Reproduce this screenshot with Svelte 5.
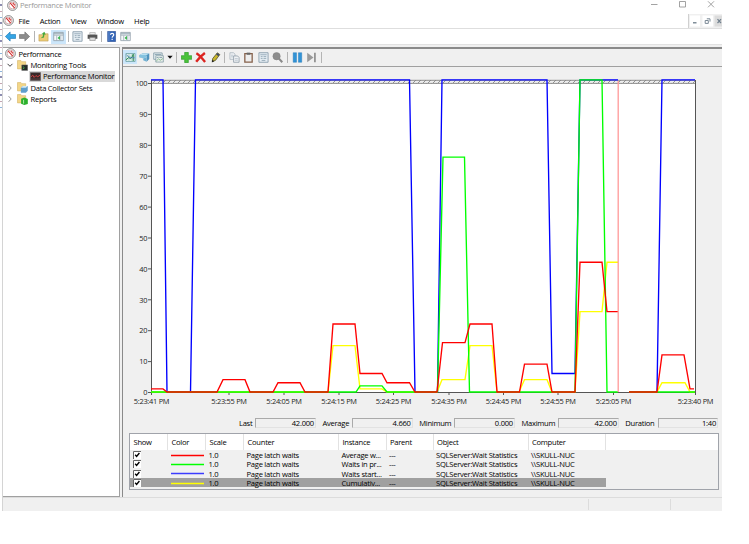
<script lang="ts">
  const menu = ['File', 'Action', 'View', 'Window', 'Help'];
  const mainTools = ['back', 'forward', '|', 'up', 'pane*', '|', 'properties', 'print', '|', 'help', 'pane'];
  const chartTools = ['graph*', 'log', 'image', 'caret', '|', 'add', 'delete', 'highlight', '|', 'copy', 'paste', 'properties', 'find', '|', 'pause', 'step', '|'];

  const tree = [
    { label: 'Performance', icon: 'perf', level: 0, arrow: '' },
    { label: 'Monitoring Tools', icon: 'tools', level: 1, arrow: 'open' },
    { label: 'Performance Monitor', icon: 'monitor', level: 2, arrow: '', selected: true },
    { label: 'Data Collector Sets', icon: 'sets', level: 1, arrow: 'closed' },
    { label: 'Reports', icon: 'reports', level: 1, arrow: 'closed' },
  ];

  // plot area in svg units
  const left = 28;
  const right = 572;
  const bottom = 325;
  const unit = 3.09;

  const yTicks = [0, 10, 20, 30, 40, 50, 60, 70, 80, 90, 100];
  const xTicks: [number, string][] = [
    [0, '5:23:41 PM'],
    [77.5, '5:23:55 PM'],
    [132.5, '5:24:05 PM'],
    [187.5, '5:24:15 PM'],
    [242, '5:24:25 PM'],
    [297.5, '5:24:35 PM'],
    [352, '5:24:45 PM'],
    [406.5, '5:24:55 PM'],
    [462, '5:25:05 PM'],
    [544, '5:23:40 PM'],
  ];

  // each run is x, value, x, value, ...
  const series = [
    {
      color: '#0000ff',
      runs: [
        [0, 101, 12, 101, 16, 0, 39.5, 0, 44.5, 101, 258.5, 101, 264, 0, 286.5, 0, 291, 101, 396, 101, 401, 6, 424, 6, 429, 101, 467, 101],
        [478, 0, 506, 0, 511, 101, 544, 101],
      ],
    },
    {
      color: '#ffff00',
      runs: [
        [0, 0, 177, 0, 182, 15, 204, 15, 209, 1, 231, 1, 236, 0, 286, 0, 291, 4, 314, 4, 319, 15, 341, 15, 346, 0, 368, 0, 373.5, 4, 396, 4, 401, 0, 424, 0, 429, 26, 451, 26, 456, 42, 467, 42],
        [478, 0, 506, 0, 511, 3, 534, 3, 539, 0, 544, 0],
      ],
    },
    {
      color: '#00ff00',
      runs: [
        [0, 0, 205, 0, 209, 2, 231, 2, 236, 0, 286.5, 0, 292, 76, 313.5, 76, 318.5, 0, 424, 0, 429, 101, 451, 101, 456, 0, 467, 0],
        [478, 0, 544, 0],
      ],
    },
    {
      color: '#ff0000',
      runs: [
        [0, 1, 12, 1, 16, 0, 66, 0, 72, 4, 94, 4, 99, 0, 122, 0, 127, 3, 149, 3, 154, 0, 177, 0, 182, 22, 204, 22, 209, 6, 231, 6, 236, 3, 258.5, 3, 264, 0, 286, 0, 291.5, 16, 314, 16, 319, 22, 341, 22, 346, 0, 368.5, 0, 373.5, 9, 396, 9, 401, 0, 424, 0, 429, 42, 451, 42, 456, 26, 467, 26],
        [478, 0, 506, 0, 511, 12, 533, 12, 539, 1, 543, 1],
      ],
    },
  ];

  function yPos(v: number) {
    return bottom - v * unit;
  }

  function toPoints(run: number[]) {
    let out = '';
    for (let i = 0; i < run.length; i += 2) {
      out += `${left + run[i]},${yPos(run[i + 1])} `;
    }
    return out;
  }

  const stats = [
    ['Last', '42.000'],
    ['Average', '4.660'],
    ['Minimum', '0.000'],
    ['Maximum', '42.000'],
    ['Duration', '1:40'],
  ];

  const columns = ['Show', 'Color', 'Scale', 'Counter', 'Instance', 'Parent', 'Object', 'Computer'];
  const counters = [
    { color: '#ff0000', instance: 'Average w...' },
    { color: '#00ff00', instance: 'Waits in pr...' },
    { color: '#3c3cff', instance: 'Waits start...' },
    { color: '#ffff00', instance: 'Cumulativ...' },
  ];
</script>

{#snippet icon(name: string)}
  <svg class="icon" viewBox="0 0 12 12" fill="none">
    {#if name === 'perf'}
      <circle cx="6" cy="6" r="5.3" fill="#fff" stroke="#777" stroke-width="1" />
      <circle cx="6" cy="6" r="3.7" stroke="#c9a0a0" stroke-width=".9" />
      <path d="M3.4 3.2 8.4 8.8M6.2 3.2 8.8 6" stroke="#d32f2f" stroke-width="1.2" />
    {:else if name === 'back'}
      <path d="M.4 6 5.6 1V3.9H11.6V8.1H5.6V11Z" fill="#35a5e5" stroke="#1b78b5" stroke-width=".7" />
    {:else if name === 'forward'}
      <path d="M11.6 6 6.4 1V3.9H.4V8.1H6.4V11Z" fill="#8c8c8c" stroke="#707070" stroke-width=".7" />
    {:else if name === 'up'}
      <path d="M1 4H5L6 3H11V11H1Z" fill="#eccb76" stroke="#b99a50" stroke-width=".6" />
      <path d="M3 8 5.5 5.5 5 3 3.5 3.5 7 .8 8.4 4 7 3.8 6.5 7Z" fill="#45a83a" />
    {:else if name === 'pane'}
      <path d="M.8 1.5H11.2V10.5H.8Z" fill="#f5f8fa" stroke="#8696a0" stroke-width=".8" />
      <path d="M1 2.5H11M1 4.4H11" stroke="#8fa2ad" stroke-width="1" />
      <path d="M4 5V10.5M8.5 5V10.5" stroke="#9caab3" stroke-width=".8" />
      <path d="M7.6 5.3V9.7L5 7.5Z" fill="#35b24a" />
    {:else if name === 'properties'}
      <path d="M1 .8H11V11.2H1Z" fill="#e5edf3" stroke="#8298a8" stroke-width=".9" />
      <path d="M2.5 3H9.5M3 5H5M6 5H9M3 7H5M6 7H9M4 9.2H8" stroke="#8298a8" stroke-width=".8" />
    {:else if name === 'print'}
      <path d="M3 1.7H9V4H3Z" fill="#eee" stroke="#999" stroke-width=".6" />
      <path d="M.7 4H11.3V8.5H.7Z" fill="#555" />
      <path d="M3 7H9V10.3H3Z" fill="#ddd" stroke="#777" stroke-width=".6" />
    {:else if name === 'help'}
      <path d="M1.8.4H10.4V11.6H1.8Z" fill="#3264b7" stroke="#1e428a" stroke-width=".6" />
      <path d="M3.2 .8V11" stroke="#7fa5e0" stroke-width=".7" />
      <path d="M4.9 4.2C4.9 2 8.5 2 8.4 4.3 8.3 5.6 6.7 5.7 6.7 7.4M6.7 8.5V9.9" stroke="#fff" stroke-width="1.3" />
    {:else if name === 'graph'}
      <path d="M1 1.7H11V10.3H1Z" fill="#e5f2ee" stroke="#5e9a9e" stroke-width=".8" />
      <path d="M1 4.6H11M1 7.4H11M4.3 1.7V10.3M7.7 1.7V10.3" stroke="#8bbbb8" stroke-width=".6" />
      <path d="M1 8.7 4 6 6 7.2 8 5 9 2.4V9.8" stroke="#25874a" stroke-width="1" />
      <path d="M1.6 3 4.5 5.6 7 6.2 10.6 6.2" stroke="#477abb" stroke-width=".8" />
    {:else if name === 'log'}
      <path d="M.6 3.4 3.6 1.6H11.2V7.6L8.3 10.6V4.3L.6 6Z" fill="#4f93bd" />
      <path d="M.6 3.2H8.3L11.2 1.6H3.6Z" fill="#b8dff0" />
      <path d="M.6 3.4H8.3V5.6L4.6 7.2 .6 5.8Z" fill="#84c2df" />
      <path d="M4.6 7.2 8.3 5.6V10.6L4.6 9Z" fill="#6fb0d2" />
    {:else if name === 'image'}
      <path d="M.8 1H10V8H.8Z" fill="#eaf1f4" stroke="#8199a5" stroke-width=".9" />
      <path d="M3 4H11.3V11H3Z" fill="#e6ede9" stroke="#8199a5" stroke-width=".8" />
      <path d="M2 2.7H9M4 6H6M7 6H10" stroke="#7d9aa8" stroke-width=".9" />
      <path d="M3.5 10 6 7.5 8 9 11 7" stroke="#7fb488" stroke-width=".9" />
    {:else if name === 'caret'}
      <path d="M2 4.2H10L6 8.6Z" fill="#111" />
    {:else if name === 'add'}
      <path d="M4 .4H8V4H11.7V8H8V11.6H4V8H.3V4H4Z" fill="#4bc33b" stroke="#2b9927" stroke-width=".7" />
    {:else if name === 'delete'}
      <path d="M1.5 1.3Q5 3.2 11 10.9M10.8 1Q5.5 4.8 1.3 10.7" stroke="#dc2420" stroke-width="2.6" />
    {:else if name === 'highlight'}
      <path d="M2.4 10.5 3 7 8 .9 10.7 2.8 5.9 9.2Z" fill="#c8b62c" stroke="#57552d" stroke-width=".9" />
      <path d="M7.3 1.9 9.8 3.8" stroke="#39456c" stroke-width="1.8" />
      <path d="M2 11.4 2.6 8.5 4.6 10Z" fill="#222" />
    {:else if name === 'copy'}
      <path d="M1 .8H5L6.5 2.4V8H1Z" fill="#eef1f4" stroke="#a4b0ba" stroke-width=".8" />
      <path d="M5 4.3H9.4L11 6V11.2H5Z" fill="#eef1f4" stroke="#8796a2" stroke-width=".8" />
      <path d="M2.2 3.5H4.5M2.2 5.3H4.5M6.4 7.2H9.6M6.4 9H9.6" stroke="#a4b4c0" stroke-width=".7" />
    {:else if name === 'paste'}
      <path d="M2 1.8H10V11H2Z" fill="#eee" stroke="#85604a" stroke-width="1.4" />
      <path d="M4 .7H8V3H4Z" fill="#666" />
    {:else if name === 'find'}
      <circle cx="5" cy="4.6" r="4" fill="#8d8d8d" stroke="#828282" stroke-width=".6" />
      <path d="M7.4 7 11.2 11.2" stroke="#8a8a8a" stroke-width="2.3" />
    {:else if name === 'pause'}
      <path d="M1.3.8H4.9V11.2H1.3ZM7 .8H10.6V11.2H7Z" fill="#3193d6" stroke="#247aba" stroke-width=".5" />
    {:else if name === 'step'}
      <path d="M1.3.8 8.2 6 1.3 11.2Z" fill="#9a9a9a" />
      <path d="M9.7.8V11.2" stroke="#949494" stroke-width="2" />
    {:else if name === 'monitor'}
      <path d="M.3 1.6H11.7V10.6H.3Z" fill="#382929" stroke="#777" stroke-width=".6" />
      <path d="M1 6.5 3 4.5 4.5 7 6.5 5 8.5 6.3 11 4.4" stroke="#dc4343" stroke-width="1" />
      <path d="M1 8.8H11" stroke="#776060" stroke-width=".6" />
    {:else}
      <path d="M.5 .6H4.3L5.3 1.8H9.5V9.7H.5Z" fill="#f3d688" stroke="#d2b05f" stroke-width=".6" />
      {#if name === 'tools'}
        <path d="M5.2 5.4H11.6V11.4H5.2Z" fill="#252b28" stroke="#666" stroke-width=".5" />
        <path d="M6.4 7 8 8.5 6.4 9.8" stroke="#4ac05a" stroke-width=".9" />
      {:else if name === 'sets'}
        <path d="M4.2 6.3 6.3 4.4H11.7V9.5L9.7 11.7H4.2Z" fill="#5f9fcc" />
        <path d="M4.2 6.3H9.7L11.7 4.4H6.3Z" fill="#d0e8f5" />
      {:else}
        <path d="M4.5 5.2 8 3.9 11.8 5.4V10.9L8 12 4.5 10.7Z" fill="#2bb02c" />
        <path d="M7.2 6.3V10.5" stroke="#bdf0b7" stroke-width="1" />
      {/if}
    {/if}
  </svg>
{/snippet}

{#snippet tools(items: string[])}
  {#each items as item}
    {#if item === '|'}
      <span class="sep"></span>
    {:else}
      <button class="tool" class:on={item.endsWith('*')} class:narrow={item === 'caret'} aria-label={item}>
        {@render icon(item.replace('*', ''))}
      </button>
    {/if}
  {/each}
{/snippet}

<div class="screen">
  <div class="edge"></div>
  <div class="window">
    <header class="title">
      {@render icon('perf')}
      <span>Performance Monitor</span>
      <svg class="controls" viewBox="0 0 72 12" fill="none" stroke="#999" stroke-width=".9">
        <path d="M1 5.5H7.5" />
        <path d="M29.5 2.5H35.5V8H29.5Z" />
        <path d="M58 2.3 64 8.3M64 2.3 58 8.3" />
      </svg>
    </header>

    <nav class="menu">
      {@render icon('perf')}
      {#each menu as item}
        <span>{item}</span>
      {/each}
      <svg class="mdi" viewBox="0 0 34 14" fill="none">
        <path d="M0 0H34V14H0Z" fill="#f0f0f0" />
        <path d="M.5 0V14" stroke="#d0d0d0" />
        <path d="M2 1.5H12V12.5H2ZM14.5 1.5H25V12.5H14.5Z" fill="#fff" />
        <path d="M26.5 1.5H34V12.5H26.5Z" fill="#dcdcdc" />
        <path d="M5 8.8H8.5" stroke="#60717f" stroke-width="1.2" />
        <path d="M18.8 4.8H22V7.6M17.2 6.5H20.3V9.4H17.2Z" stroke="#7b8995" stroke-width="1" />
        <path d="M29.5 5.2 33 9M33 5.2 29.5 9" stroke="#71808e" stroke-width="1.2" />
      </svg>
    </nav>

    <div class="toolbar">{@render tools(mainTools)}</div>

    <main>
      <aside>
        {#each tree as node}
          <div class="node level{node.level}">
            {#if node.level === 1}
              <svg class="arrow" viewBox="0 0 8 8" fill="none" stroke={node.arrow === 'open' ? '#444' : '#999'}>
                <path d={node.arrow === 'open' ? 'M1.5 2.8 4 5.3 6.5 2.8' : 'M2.6 1.2 5.2 4 2.6 6.8'} />
              </svg>
            {/if}
            <div class="entry" class:selected={node.selected}>
              {@render icon(node.icon)}
              <span>{node.label}</span>
            </div>
          </div>
        {/each}
      </aside>

      <section>
        <div class="chart-tools">{@render tools(chartTools)}</div>

        <svg class="chart" viewBox="0 0 599 345" width="599" height="345">
          <defs>
            <pattern id="hatch" width="5" height="4" patternUnits="userSpaceOnUse">
              <rect width="5" height="4" fill="#eee" />
              <path d="M0 4 4 0" stroke="#888" stroke-width=".9" />
            </pattern>
          </defs>
          <rect x={left} y="13" width={right - left} height={bottom - 13} fill="#fff" />
          <rect x={left} y="13" width={right - left} height="3.5" fill="url(#hatch)" />
          <path d="M{left} 13.3H{right}M{left} 16.4H{right}" stroke="#858585" stroke-width=".9" />
          <path d="M{left + 0.5} 13V{bottom + 0.5}H{right + 0.5}V13" fill="none" stroke="#555" />

          {#each yTicks as t}
            <path d="M{left - 3} {yPos(t) + 0.5}H{left}" stroke="#555" />
            <text x={left - 3.7} y={yPos(t) + 3.2} text-anchor="end">{t}</text>
          {/each}
          {#each xTicks as [x, label]}
            <path d="M{left + x + 0.5} {bottom}v3" stroke="#555" />
            <text x={left + x + 0.5} y="336.8" text-anchor="middle" textLength="35.5" lengthAdjust="spacingAndGlyphs">{label}</text>
          {/each}

          {#each series as s}
            {#each s.runs as run}
              <polyline points={toPoints(run)} fill="none" stroke={s.color} stroke-width="1.35" />
            {/each}
          {/each}
          <path d="M495.2 14V{bottom}" stroke="#ff9999" stroke-width="1.3" />
        </svg>

        <div class="stats">
          {#each stats as [label, value]}
            <span class="label">{label}</span>
            <span class="value">{value}</span>
          {/each}
        </div>

        <div class="legend">
          <div class="row head">
            {#each columns as c}
              <span>{c}</span>
            {/each}
          </div>
          {#each counters as c, i}
            <div class="row" class:picked={i === 3}>
              <span class="show">
                <svg viewBox="0 0 8 8" fill="none">
                  <path d="M0 0H8V8H0Z" fill="#fff" />
                  <path d="M.5 8V.5H8" stroke="#666" />
                  <path d="M2.2 3.8 3.6 5.4 6.4 2" stroke="#000" stroke-width="1.4" />
                </svg>
              </span>
              <span class="swatch">
                <svg viewBox="0 0 33 5"><path d="M0 2.5H33" stroke={c.color} stroke-width="1.5" /></svg>
              </span>
              <span>1.0</span>
              <span>Page latch waits</span>
              <span>{c.instance}</span>
              <span>---</span>
              <span>SQLServer:Wait Statistics</span>
              <span>\\SKULL-NUC</span>
            </div>
          {/each}
        </div>
      </section>
    </main>

    <footer><span></span><span></span></footer>
  </div>
</div>

<style>
  :global(body) {
    background: #fff;
    overflow: hidden;
  }

  .screen {
    display: flex;
    width: 749px;
    height: 544px;
    font: 7.6px/10px 'Open Sans', 'Noto Sans', sans-serif;
    letter-spacing: -0.26px;
    color: #000;
    white-space: nowrap;
  }

  .edge {
    flex: none;
    width: 2px;
    height: 108px;
    background: repeating-linear-gradient(#fff 0 4px, #8c8cb0 4px 6px, #fff 6px 11px, #c4a5b1 11px 12px, #fff 12px 17px, #8eb5dc 17px 18px);
  }

  .window {
    display: flex;
    flex-direction: column;
    box-sizing: border-box;
    width: 720px;
    height: 511px;
    border-left: 1px solid #d4d4d4;
  }

  .icon {
    flex: none;
    width: 11px;
    height: 11px;
  }

  .title {
    display: flex;
    align-items: center;
    height: 10px;
    padding: 0 0 3px 4px;
    gap: 2px;
    color: #999;
  }

  .controls {
    width: 72px;
    height: 12px;
    margin-left: auto;
  }

  .menu {
    display: flex;
    align-items: center;
    box-sizing: border-box;
    height: 16px;
    border-bottom: 1px solid #dedede;
  }

  .menu span {
    margin-left: 4.5px;
    margin-right: 5.8px;
  }

  .mdi {
    width: 34px;
    height: 14px;
    margin-left: auto;
  }

  .toolbar,
  .chart-tools {
    display: flex;
    align-items: center;
    flex: none;
  }

  .toolbar {
    height: 15px;
  }

  .tool {
    display: flex;
    align-items: center;
    justify-content: center;
    width: 14.4px;
    height: 14px;
    padding: 0;
    border: 0;
    background: none;
  }

  .tool.on {
    background: #cce6fa;
  }

  .tool.narrow {
    width: 8px;
  }

  .tool.narrow .icon {
    width: 8px;
    height: 8px;
  }

  .sep {
    width: 1px;
    height: 11px;
    margin: 0 2px;
    background: #b4b4b4;
  }

  main {
    display: flex;
    box-sizing: border-box;
    height: 453px;
    padding-top: 2px;
    gap: 2px;
    background: #f0f0f0;
    border-top: 1px solid #e2e2e2;
  }

  aside {
    box-sizing: border-box;
    width: 117px;
    padding-left: 2px;
    background: #fff;
    border: 1px solid #a0a0a0;
    border-left-width: 0;
  }

  .node {
    display: flex;
    align-items: center;
    height: 11.35px;
  }

  .level1 {
    padding-left: 1px;
  }

  .level2 {
    padding-left: 23.5px;
  }

  .arrow {
    width: 8px;
    height: 8px;
    margin-right: 3px;
  }

  .entry {
    display: flex;
    align-items: center;
    height: 11px;
    gap: 2.5px;
    padding-right: 1px;
  }

  .entry.selected {
    background: #d9d9d9;
    padding-left: 1px;
  }

  section {
    display: flex;
    flex-direction: column;
    box-sizing: border-box;
    flex: 1;
    border-top: 2px solid #8a8a8a;
    border-left: 1px solid #8a8a8a;
  }

  .chart-tools {
    box-sizing: border-box;
    height: 18px;
    padding-bottom: 1px;
    border-bottom: 1px solid #a0a0a0;
  }

  .chart {
    flex: none;
    display: block;
  }

  .chart text {
    font-size: 7.4px;
    fill: #222;
  }

  .stats {
    display: flex;
    align-items: center;
    height: 21px;
    margin-right: 4px;
    justify-content: flex-end;
  }

  .label {
    margin: 0 3px 0 6.5px;
  }

  .value {
    box-sizing: border-box;
    width: 60.5px;
    height: 10px;
    line-height: 9px;
    padding-right: 1px;
    text-align: right;
    border: 1px solid #e2e2e2;
    border-top-color: #aaa;
    border-left-color: #aaa;
  }

  .legend {
    box-sizing: border-box;
    width: 590px;
    height: 57px;
    margin-left: 6px;
    border: 1px solid #a0a3aa;
  }

  .row {
    display: grid;
    grid-template-columns: 38px 38px 38px 95px 47.5px 47px 95px 77.5px;
    align-items: center;
    width: 476px;
    height: 9.35px;
  }

  .row span {
    padding-left: 2.5px;
  }

  .head {
    width: 588px;
    height: 16px;
    background: #fff;
  }

  .head span {
    box-sizing: border-box;
    height: 16px;
    padding-left: 3.5px;
    line-height: 16px;
    border-right: 1px solid #e2e2e2;
  }

  .picked {
    background: #a0a0a0;
  }

  .show svg {
    display: block;
    width: 8px;
    height: 8px;
  }

  .swatch svg {
    display: block;
    width: 33px;
    height: 5px;
  }

  footer {
    display: flex;
    justify-content: flex-end;
    box-sizing: border-box;
    height: 14px;
    background: #f0f0f0;
    border-top: 1px solid #dcdcdc;
  }

  footer span {
    box-sizing: border-box;
    width: 82px;
    margin: 1px 0;
    border-left: 1px solid #dcdcdc;
  }

  footer span:last-child {
    width: 52px;
  }
</style>
